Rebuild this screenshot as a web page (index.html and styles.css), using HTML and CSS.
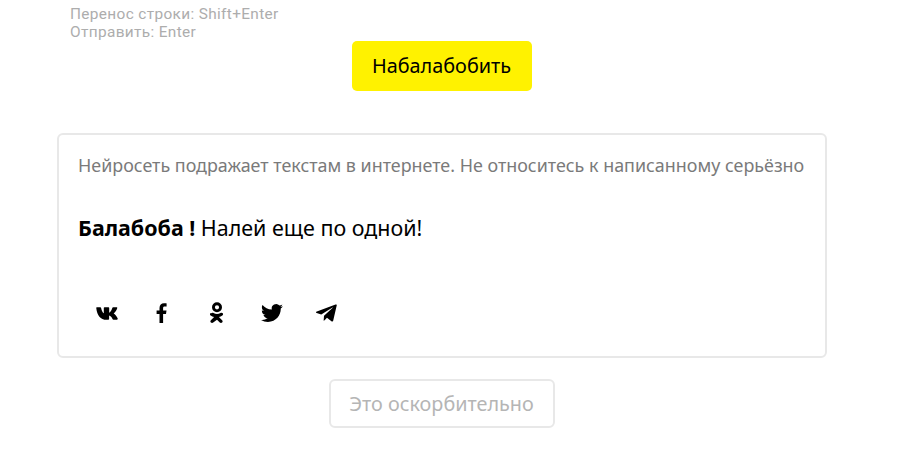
FILE: index.html
```html
<!DOCTYPE html>
<html lang="ru">
<head>
<meta charset="utf-8">
<title>Балабоба</title>
<link rel="stylesheet" href="styles.css">
</head>
<body>
<main class="page">
  <div class="hint">
    <div>Перенос строки: Shift+Enter</div>
    <div>Отправить: Enter</div>
  </div>
  <div class="action">
    <button class="btn-primary" type="button">Набалабобить</button>
  </div>
  <section class="card">
    <p class="disclaimer">Нейросеть подражает текстам в интернете. Не относитесь к написанному серьёзно</p>
    <p class="result"><b>Балабоба !</b> Налей еще по одной!</p>
    <div class="share">
      <a class="share-item" href="#" aria-label="ВКонтакте">
        <svg viewBox="0 0 22 13" width="22" height="13"><path d="M10.500 12.800C4.500 12.800 1 8.300.3 1.200.2.500.5.300 1 .300h3.300c.5 0 .7.300.8.800.6 3 1.700 4.800 2.700 5.200V1c0-.5.300-.7.700-.7h4c.5 0 .7.300.7.700v4.800c.9-.2 2.200-2 3-4.500.2-.6.400-1 1-1h3.300c.7 0 .9.400.7 1-.5 2-2.300 4.300-3.500 5.300 1.300.8 3.200 2.800 4 5 .2.700-.1 1.100-.8 1.100h-3.400c-.5 0-.8-.3-1-.8-.6-1.500-2-3-3.400-3.300v3.300c0 .5-.3.800-.8.800z"/></svg>
      </a>
      <a class="share-item" href="#" aria-label="Facebook">
        <svg viewBox="0 0 12 20" width="12" height="20"><path d="M3.500 20v-9H.6V7.500h2.900V5c0-3 1.800-4.700 4.500-4.700 1.200 0 2.300.1 2.600.1v3.100H8.800c-1.400 0-1.700.7-1.700 1.700v2.300h3.400L10 11H7.100v9z"/></svg>
      </a>
      <a class="share-item" href="#" aria-label="Одноклассники">
        <svg viewBox="0 0 14 22" width="14" height="22"><path fill-rule="evenodd" d="M7 .3a5 5 0 1 1 0 10 5 5 0 0 1 0-10zm0 2.900a2.100 2.100 0 1 0 0 4.200 2.100 2.100 0 0 0 0-4.200z"/><path d="M1.200 11.300c.6-.7 1.600-.8 2.300-.3 2.200 1.400 4.800 1.400 7 0 .7-.5 1.700-.4 2.300.3.500.8.300 1.800-.5 2.300-1 .7-2.200 1.200-3.400 1.400l3.200 3.300c.7.600.7 1.700 0 2.300-.6.600-1.700.6-2.300 0L7 17.800l-3.800 2.800c-.6.600-1.700.6-2.300 0-.7-.6-.7-1.700 0-2.300l3.200-3.300c-1.200-.2-2.400-.7-3.400-1.400-.8-.5-1-1.500-.5-2.300z"/></svg>
      </a>
      <a class="share-item" href="#" aria-label="Twitter">
        <svg viewBox="0 0 24 24" width="22" height="22"><path d="M23.950 4.570a10 10 0 0 1-2.820.77 4.960 4.960 0 0 0 2.160-2.720c-.95.550-2 .96-3.130 1.190a4.920 4.920 0 0 0-8.380 4.480C7.690 8.100 4.070 6.130 1.640 3.160a4.820 4.820 0 0 0-.67 2.480c0 1.710.87 3.210 2.190 4.100a4.900 4.900 0 0 1-2.230-.62v.06a4.920 4.920 0 0 0 3.950 4.830 5 5 0 0 1-2.210.08 4.940 4.940 0 0 0 4.600 3.420A9.870 9.870 0 0 1 0 19.540a14 14 0 0 0 7.560 2.210c9.050 0 14-7.500 14-13.980 0-.21 0-.42-.02-.63a9.940 9.940 0 0 0 2.410-2.550z"/></svg>
      </a>
      <a class="share-item" href="#" aria-label="Telegram">
        <svg viewBox="0 0 22 18" width="21" height="18"><path d="M21.800.6 18 17.200c-.2.800-.8 1-1.500.6l-5-3.700-2.500 2.400c-.3.300-.5.500-1 .5l.4-5.100L17.500 3.600c.4-.4-.1-.6-.6-.2L5.500 10.500.7 9c-1-.3-1-1 .2-1.500L20.500.1c.9-.3 1.600.2 1.300.5z"/></svg>
      </a>
    </div>
  </section>
  <div class="action">
    <button class="btn-outline" type="button">Это оскорбительно</button>
  </div>
</main>
</body>
</html>
```

FILE: styles.css
```css
* {
  box-sizing: border-box;
}

html,
body {
  margin: 0;
  padding: 0;
  background: #fff;
}

body {
  font-family: "Noto Sans", "Open Sans", sans-serif;
  color: #000;
}

.page {
  width: 884px;
  height: 471px;
  padding-top: 5px;
  overflow: hidden;
}

.hint {
  margin-left: 70px;
  font-family: Roboto, "Noto Sans", sans-serif;
  font-size: 15.4px;
  line-height: 18px;
  letter-spacing: 0.35px;
  color: #adadad;
}

.action {
  display: flex;
  justify-content: center;
}

.btn-primary {
  display: block;
  width: 180px;
  height: 50px;
  border: 0;
  border-radius: 5px;
  background: #fff200;
  color: #000;
  font: 400 19.85px/50px "Noto Sans", sans-serif;
  padding: 0 1px 0 0;
}

.card {
  width: 770px;
  height: 225px;
  margin: 42px 0 21px 57px;
  padding: 18px 19px 0;
  border: 2px solid #e8e8e8;
  border-radius: 6px;
}

.disclaimer {
  margin: 0;
  font-size: 17.9px;
  line-height: 24px;
  color: #7a7a7a;
  white-space: nowrap;
}

.result {
  margin: 36px 0 0;
  font-size: 21.45px;
  line-height: 30px;
}

.result b {
  font-weight: 700;
}

.share {
  display: flex;
  margin-top: 58px;
  margin-left: 1px;
}

.share-item {
  display: flex;
  align-items: center;
  justify-content: center;
  width: 55px;
  height: 24px;
}

.share-item svg {
  display: block;
  fill: #000;
}

.btn-outline {
  display: block;
  width: 226px;
  height: 49px;
  border: 2px solid #e8e8e8;
  border-radius: 6px;
  background: #fff;
  color: #b5b5b5;
  font: 400 19.8px/45px "Noto Sans", sans-serif;
  padding: 0 1px 0 0;
}
```
